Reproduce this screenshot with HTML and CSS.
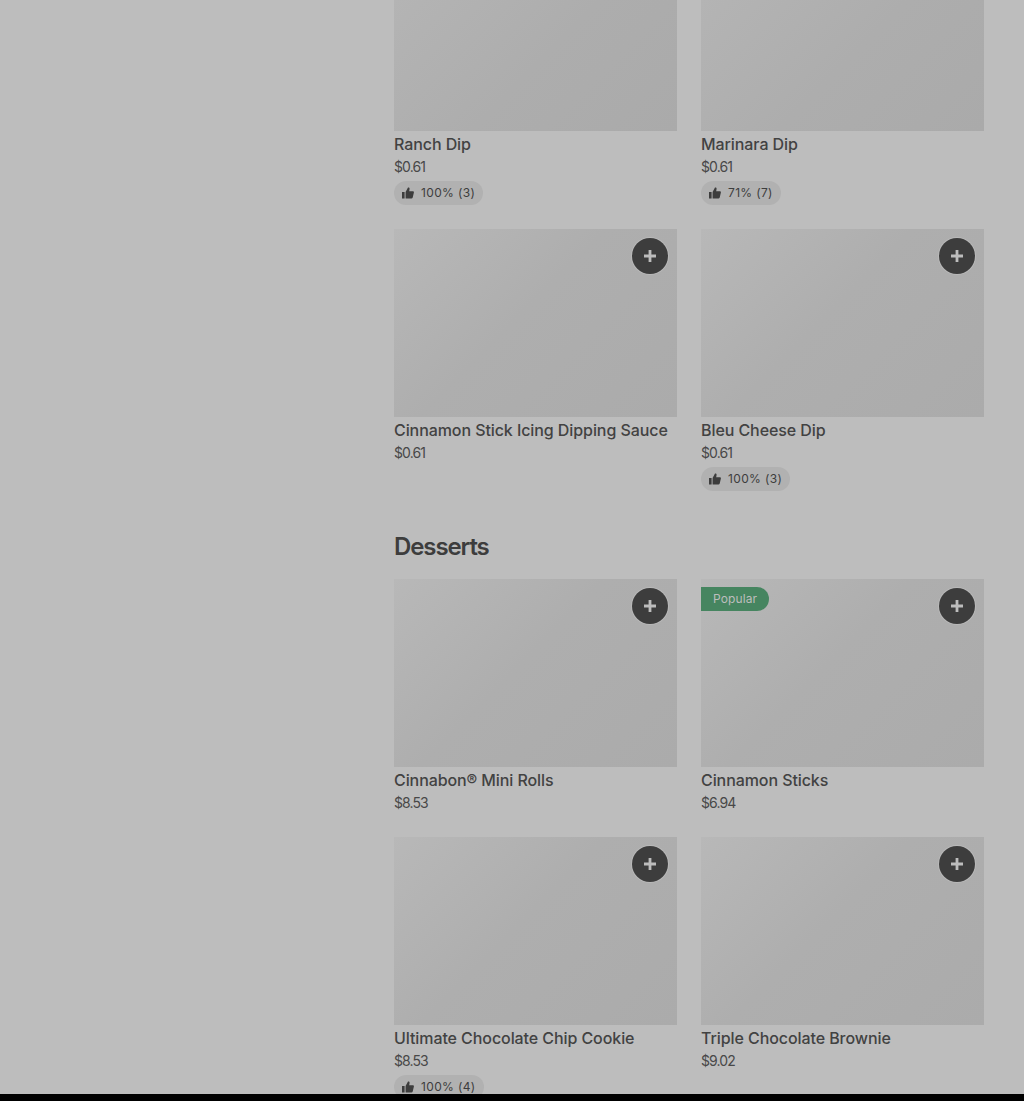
FILE: index.html
```html
<!DOCTYPE html>
<html lang="en">
<head>
<meta charset="utf-8">
<title>Menu</title>
<link rel="stylesheet" href="styles.css">
</head>
<body>
<svg class="defs" width="0" height="0" aria-hidden="true">
  <symbol id="plus" viewBox="0 0 14 14"><path d="M5.6 1h2.8v4.6H13v2.8H8.4V13H5.6V8.4H1V5.6h4.6z"/></symbol>
  <symbol id="thumb" viewBox="0 0 12 12"><path d="M0 5h2.6v6.5H0zM3.6 5 6 .6c.9-.3 1.6.3 1.6 1.2L7.2 4.2h3.6c.8 0 1.3.6 1.1 1.4l-1.2 5c-.2.6-.6.9-1.2.9H3.6z"/></symbol>
</svg>
<main class="page">
  <div class="grid">
    <article class="card">
      <div class="photo photo-cut"></div>
      <h3 class="name">Ranch Dip</h3>
      <p class="price">$0.61</p>
      <span class="rating"><svg class="thumb"><use href="#thumb"/></svg>100% (3)</span>
    </article>
    <article class="card">
      <div class="photo photo-cut"></div>
      <h3 class="name">Marinara Dip</h3>
      <p class="price">$0.61</p>
      <span class="rating"><svg class="thumb"><use href="#thumb"/></svg>71% (7)</span>
    </article>
    <article class="card">
      <div class="photo"><button class="add"><svg class="plus"><use href="#plus"/></svg></button></div>
      <h3 class="name">Cinnamon Stick Icing Dipping Sauce</h3>
      <p class="price">$0.61</p>
    </article>
    <article class="card">
      <div class="photo"><button class="add"><svg class="plus"><use href="#plus"/></svg></button></div>
      <h3 class="name">Bleu Cheese Dip</h3>
      <p class="price">$0.61</p>
      <span class="rating"><svg class="thumb"><use href="#thumb"/></svg>100% (3)</span>
    </article>
  </div>
  <h2 class="section-title">Desserts</h2>
  <div class="grid">
    <article class="card">
      <div class="photo"><button class="add"><svg class="plus"><use href="#plus"/></svg></button></div>
      <h3 class="name">Cinnabon® Mini Rolls</h3>
      <p class="price">$8.53</p>
    </article>
    <article class="card">
      <div class="photo"><span class="tag">Popular</span><button class="add"><svg class="plus"><use href="#plus"/></svg></button></div>
      <h3 class="name">Cinnamon Sticks</h3>
      <p class="price">$6.94</p>
    </article>
    <article class="card">
      <div class="photo"><button class="add"><svg class="plus"><use href="#plus"/></svg></button></div>
      <h3 class="name">Ultimate Chocolate Chip Cookie</h3>
      <p class="price">$8.53</p>
      <span class="rating"><svg class="thumb"><use href="#thumb"/></svg>100% (4)</span>
    </article>
    <article class="card">
      <div class="photo"><button class="add"><svg class="plus"><use href="#plus"/></svg></button></div>
      <h3 class="name">Triple Chocolate Brownie</h3>
      <p class="price">$9.02</p>
    </article>
  </div>
</main>
<div class="strip"></div>
</body>
</html>
```
FILE: styles.css
```css
* { box-sizing: border-box; }
html, body { margin: 0; height: 100%; overflow: hidden; }
body {
  display: flex;
  flex-direction: column;
  background: #000;
  font-family: Inter, "Liberation Sans", sans-serif;
  color: #3d3d3d;
}
.defs { position: absolute; }
.page {
  height: 1094px;
  flex: none;
  overflow: hidden;
  background: #bdbdbd;
  padding: 0 40px 0 394px;
}
.grid {
  display: grid;
  grid-template-columns: 283px 283px;
  column-gap: 24px;
  row-gap: 24px;
  align-items: start;
}
.card { display: flex; flex-direction: column; align-items: flex-start; }
.photo {
  position: relative;
  width: 100%;
  height: 188px;
  background: linear-gradient(135deg, #b8b8b8 0%, #aeaeae 45%, #ababab 100%);
}
.photo-cut { height: 131px; background: linear-gradient(135deg, #b4b4b4 0%, #adadad 50%, #aaaaaa 100%); }
.add {
  position: absolute;
  top: 9px;
  right: 9px;
  width: 36px;
  height: 36px;
  padding: 0;
  border: 0;
  border-radius: 50%;
  background: #3d3d3d;
  box-shadow: 0 0 0 1px #b9b9b9;
  display: flex;
  align-items: center;
  justify-content: center;
}
.plus { width: 14px; height: 14px; fill: #bdbdbd; }
.tag {
  position: absolute;
  top: 8px;
  left: 0;
  height: 24px;
  padding: 0 12px;
  border-radius: 0 12px 12px 0;
  background: #468560;
  color: #bdbdbd;
  font-size: 12px;
  line-height: 24px;
  letter-spacing: 0.1px;
}
.name {
  margin: 1px 0 0;
  font-size: 16px;
  font-weight: 500;
  line-height: 24px;
  letter-spacing: -0.08px;
  color: #424242;
}
.price {
  margin: 1px 0 0;
  font-size: 14px;
  line-height: 20px;
  letter-spacing: -0.9px;
  color: #484848;
}
.rating {
  margin-top: 4px;
  height: 24px;
  padding: 0 8px;
  display: inline-flex;
  align-items: center;
  gap: 7px;
  border-radius: 12px;
  background: #b1b1b1;
  font-size: 12px;
  line-height: 24px;
  letter-spacing: 0.35px;
}
.thumb { width: 12px; height: 12px; fill: #3d3d3d; }
.section-title {
  margin: 24px 0 0;
  height: 64px;
  padding-top: 16px;
  font-size: 24px;
  font-weight: 600;
  line-height: 32px;
  letter-spacing: -1.1px;
}
.strip { flex: 1; background: #000; }
```
